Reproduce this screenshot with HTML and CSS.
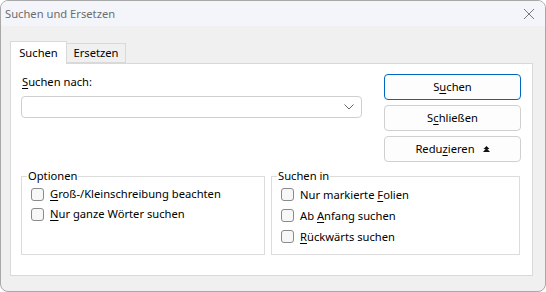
FILE: index.html
```html
<!DOCTYPE html>
<html lang="de">
<head>
    <meta charset="UTF-8">
    <title>Suchen und Ersetzen</title>
    <link rel="stylesheet" href="styles.css">
</head>
<body>
    <div class="window">
        <div class="titlebar">
            <span class="title">Suchen und Ersetzen</span>
            <svg class="close" width="12" height="12" viewBox="0 0 12 12">
                <path d="M1 1 L11 11 M11 1 L1 11" stroke="#7a7a7a" stroke-width="1" fill="none"/>
            </svg>
        </div>
        <div class="client">
            <div class="tabs">
                <div class="tab active">Suchen</div>
                <div class="tab">Ersetzen</div>
            </div>
            <div class="panel">
                <div class="top-row">
                    <div class="find">
                        <div class="field-label"><u>S</u>uchen nach:</div>
                        <div class="combo">
                            <svg class="chevron" width="10" height="6" viewBox="0 0 10 6">
                                <path d="M0.5 0.5 L5 5 L9.5 0.5" stroke="#666" stroke-width="1" fill="none"/>
                            </svg>
                        </div>
                    </div>
                    <div class="buttons">
                        <button class="btn default"><span>S<u>u</u>chen</span></button>
                        <button class="btn"><span>S<u>c</u>hließen</span></button>
                        <button class="btn"><span>Redu<u>z</u>ieren</span>
                            <svg class="arrows" width="7" height="6" viewBox="0 0 7 6">
                                <path d="M3.5 0 L6.5 3 L0.5 3 Z M3.5 2 L7 6 L0 6 Z" fill="#111"/>
                            </svg>
                        </button>
                    </div>
                </div>
                <div class="groups">
                    <fieldset class="group group-left">
                        <legend>Optionen</legend>
                        <div class="check"><span class="box"></span><span><u>G</u>roß-/Kleinschreibung beachten</span></div>
                        <div class="check"><span class="box"></span><span><u>N</u>ur ganze Wörter suchen</span></div>
                    </fieldset>
                    <fieldset class="group group-right">
                        <legend>Suchen in</legend>
                        <div class="check"><span class="box"></span><span>Nur markierte <u>F</u>olien</span></div>
                        <div class="check"><span class="box"></span><span>Ab <u>A</u>nfang suchen</span></div>
                        <div class="check"><span class="box"></span><span><u>R</u>ückwärts suchen</span></div>
                    </fieldset>
                </div>
            </div>
        </div>
    </div>
</body>
</html>
```

FILE: styles.css
```css
html {
    height: 100%;
}

body {
    margin: 0px;
    width: 546px;
    height: 292px;
    overflow: hidden;
    font-size: 11.2px;
    font-family: "Noto Sans", sans-serif;
    line-height: 16px;
    color: #000;
    background: #ffffff;
}

body * {
    box-sizing: border-box;
}

u {
    text-underline-offset: 2px;
}

.window {
    width: 546px;
    height: 292px;
    border: 1px solid #a8a8a8;
    border-radius: 8px;
    background: #f0f0f0;
    overflow: hidden;
    display: flex;
    flex-direction: column;
}

.titlebar {
    height: 25px;
    flex: none;
    display: flex;
    align-items: center;
    justify-content: space-between;
    padding: 0px 10px 0px 4px;
    background: #f3f5fa;
}

.title {
    color: #6d6d6d;
}

.close {
    display: block;
    margin-top: 1px;
}

.client {
    flex-grow: 1;
    padding: 15px 12px 15px 9px;
    display: flex;
    flex-direction: column;
}

.tabs {
    display: flex;
    align-items: flex-end;
    height: 22px;
    position: relative;
    z-index: 1;
}

.tab {
    height: 20px;
    width: 59px;
    text-align: center;
    line-height: 18px;
    border: 1px solid #d9d9d9;
    border-left: none;
    background: #f0f0f0;
}

.tab.active {
    height: 23px;
    width: 57px;
    margin-bottom: -1px;
    padding: 2px 0px 0px 0px;
    border-left: 1px solid #d9d9d9;
    border-bottom: none;
    background: #ffffff;
}

.panel {
    flex-grow: 1;
    background: #ffffff;
    border: 1px solid #d9d9d9;
    padding: 10px 11px 0px 10px;
}

.top-row {
    display: flex;
    justify-content: space-between;
}

.find {
    width: 341px;
}

.field-label {
    height: 16px;
    padding-left: 1px;
}

.combo {
    margin-top: 6px;
    height: 22px;
    border: 1px solid #cfcfcf;
    border-radius: 4px;
    background: #ffffff;
    display: flex;
    align-items: center;
    justify-content: flex-end;
    padding-right: 7px;
}

.chevron {
    display: block;
}

.buttons {
    width: 137px;
    display: flex;
    flex-direction: column;
    gap: 5px;
}

.btn {
    height: 26px;
    margin: 0px;
    padding: 0px;
    font: inherit;
    color: #000;
    background: #fdfdfd;
    border: 1px solid #d0d0d0;
    border-radius: 4px;
    display: flex;
    align-items: center;
    justify-content: center;
    gap: 8px;
}

.btn.default {
    border-color: #0067c0;
}

.arrows {
    display: block;
}

.groups {
    display: flex;
    gap: 6px;
    margin-top: 6px;
}

.group {
    margin: 0px;
    height: 87px;
    border: 1px solid #dcdcdc;
    padding: 0px 0px 0px 9px;
}

.group-left {
    width: 244px;
}

.group-right {
    width: 249px;
}

legend {
    padding: 0px 1px;
    margin-left: -4px;
    line-height: 16px;
}

.check {
    height: 20px;
    display: flex;
    align-items: center;
    gap: 6px;
}

.group-right .check {
    height: 21px;
}

.box {
    width: 13px;
    height: 13px;
    border: 1px solid #8a8a8a;
    border-radius: 3px;
    background: #f7f7f7;
    flex: none;
}
```
